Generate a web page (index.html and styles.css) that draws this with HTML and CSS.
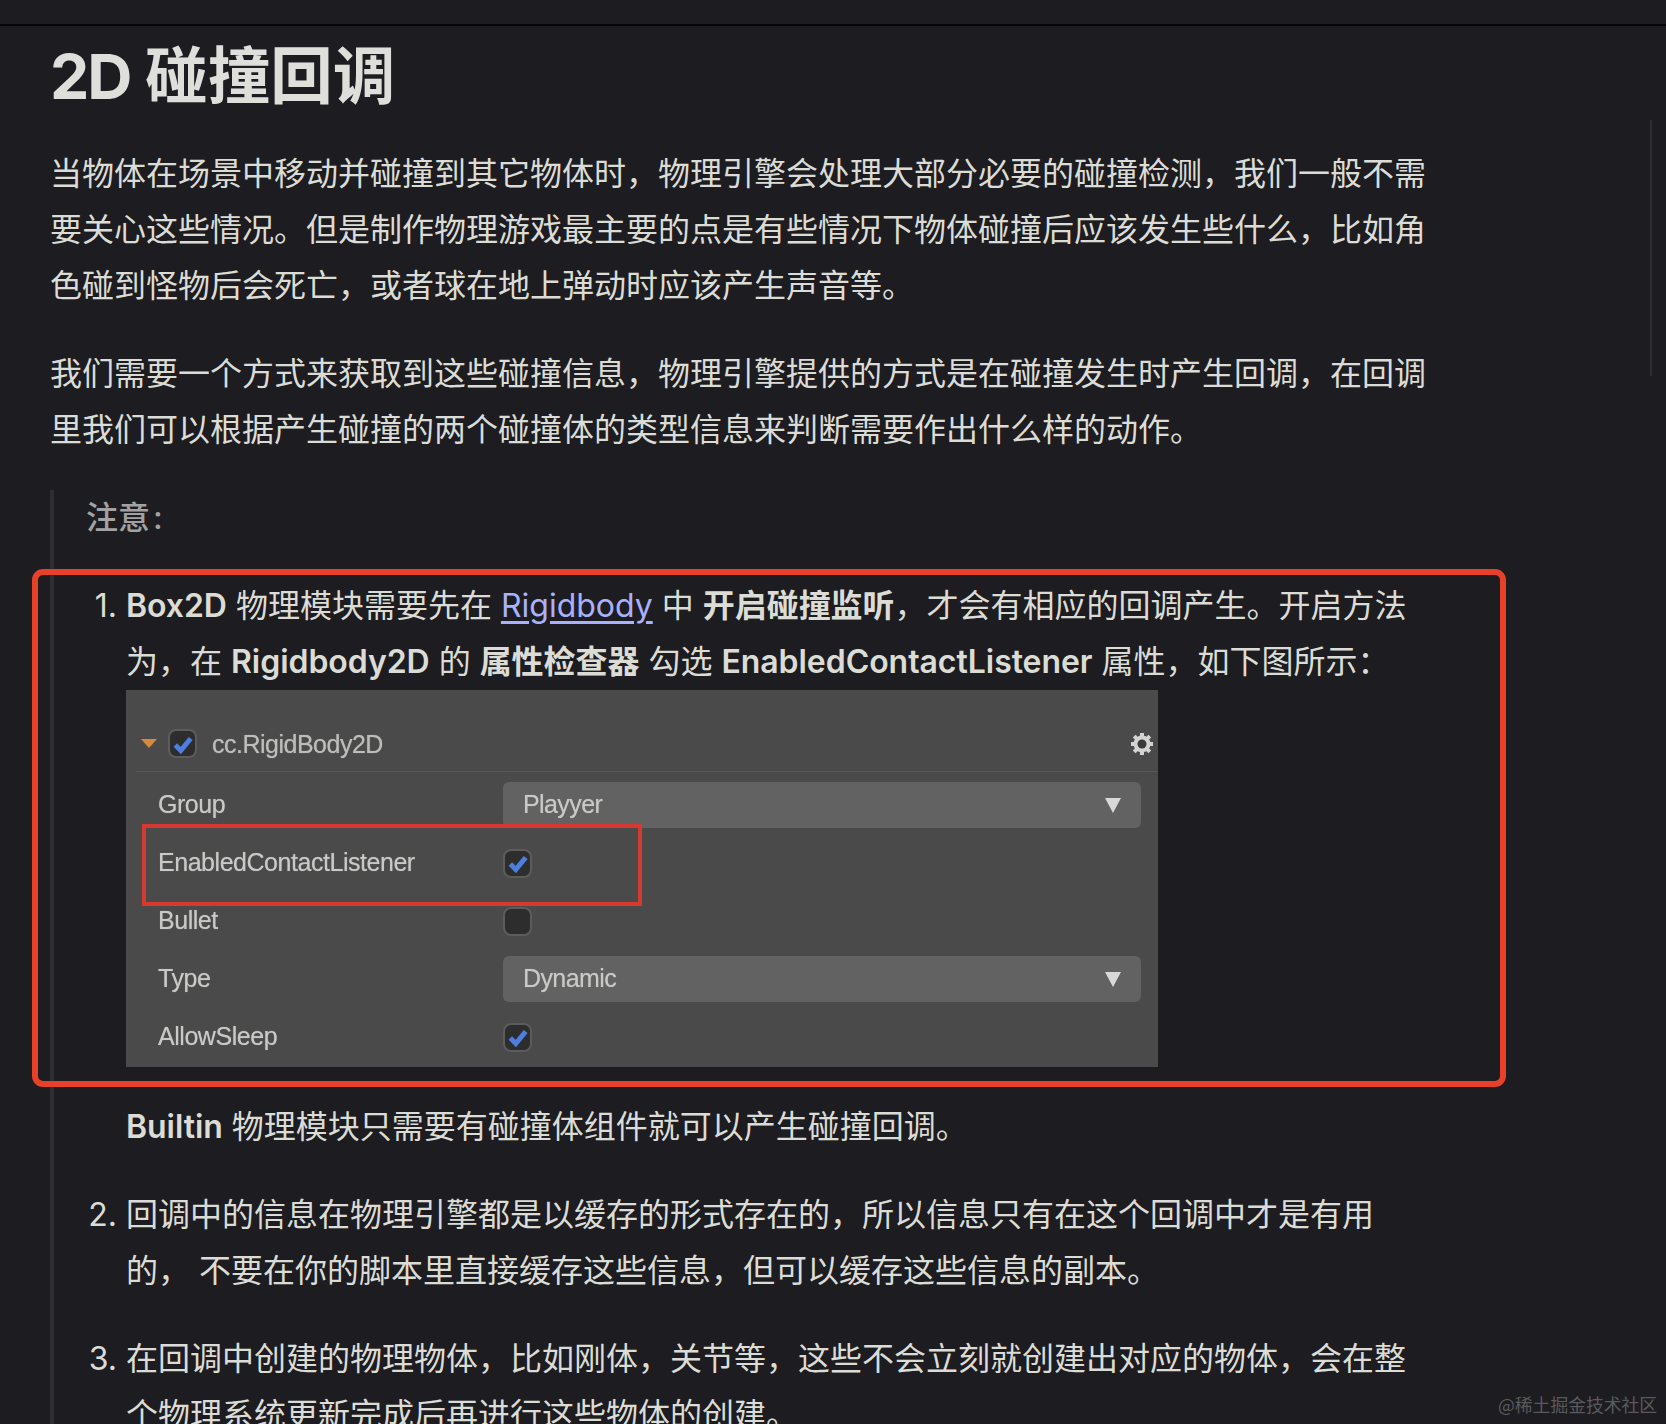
FILE: index.html
```html
<!DOCTYPE html>
<html lang="zh-CN">
<head>
<meta charset="utf-8">
<title>2D 碰撞回调</title>
<link rel="stylesheet" href="styles.css">
</head>
<body>
<header class="topbar"></header>
<main class="doc">
  <h1 class="title"><span class="title-latin">2D</span> 碰撞回调</h1>
  <p class="para">当物体在场景中移动并碰撞到其它物体时，物理引擎会处理大部分必要的碰撞检测，我们一般不需要关心这些情况。但是制作物理游戏最主要的点是有些情况下物体碰撞后应该发生些什么，比如角色碰到怪物后会死亡，或者球在地上弹动时应该产生声音等。</p>
  <p class="para">我们需要一个方式来获取到这些碰撞信息，物理引擎提供的方式是在碰撞发生时产生回调，在回调里我们可以根据产生碰撞的两个碰撞体的类型信息来判断需要作出什么样的动作。</p>
  <blockquote class="note">
    <p class="note-head">注意<span class="note-colon">:</span></p>
    <ol class="items">
      <li class="item">
        <p class="item-text"><strong>Box2D</strong> 物理模块需要先在 <a class="link" href="#">Rigidbody</a> 中 <strong>开启碰撞监听</strong>，才会有相应的回调产生。开启方法为，在 <strong>Rigidbody2D</strong> 的 <strong>属性检查器</strong> 勾选 <strong>EnabledContactListener</strong> 属性，如下图所示：</p>
        <div class="panel">
          <div class="panel-head">
            <span class="caret"></span>
            <span class="check">
              <svg class="tick" viewBox="0 0 20 20"><polyline points="3,11 8,16 17,5"></polyline></svg>
            </span>
            <span class="comp-name">cc.RigidBody2D</span>
            <svg class="gear" viewBox="0 0 24 24">
              <g class="gear-teeth">
                <line x1="12" y1="1" x2="12" y2="23"></line>
                <line x1="1" y1="12" x2="23" y2="12"></line>
                <line x1="4.2" y1="4.2" x2="19.8" y2="19.8"></line>
                <line x1="19.8" y1="4.2" x2="4.2" y2="19.8"></line>
              </g>
              <circle class="gear-body" cx="12" cy="12" r="8.5"></circle>
              <circle class="gear-hole" cx="12" cy="12" r="4.5"></circle>
            </svg>
          </div>
          <div class="rows">
            <div class="row"><span class="label">Group</span><span class="select">Playyer<i class="select-arrow"></i></span></div>
            <div class="row"><span class="label">EnabledContactListener</span><span class="check"><svg class="tick" viewBox="0 0 20 20"><polyline points="3,11 8,16 17,5"></polyline></svg></span></div>
            <div class="row"><span class="label">Bullet</span><span class="check"></span></div>
            <div class="row"><span class="label">Type</span><span class="select">Dynamic<i class="select-arrow"></i></span></div>
            <div class="row"><span class="label">AllowSleep</span><span class="check"><svg class="tick" viewBox="0 0 20 20"><polyline points="3,11 8,16 17,5"></polyline></svg></span></div>
          </div>
          <div class="mark-inner"></div>
        </div>
        <p class="item-text item-after"><strong>Builtin</strong> 物理模块只需要有碰撞体组件就可以产生碰撞回调。</p>
      </li>
      <li class="item">
        <p class="item-text">回调中的信息在物理引擎都是以缓存的形式存在的，所以信息只有在这个回调中才是有用的， 不要在你的脚本里直接缓存这些信息，但可以缓存这些信息的副本。</p>
      </li>
      <li class="item">
        <p class="item-text">在回调中创建的物理物体，比如刚体，关节等，这些不会立刻就创建出对应的物体，会在整个物理系统更新完成后再进行这些物体的创建。</p>
      </li>
    </ol>
  </blockquote>
</main>
<div class="mark-outer"></div>
<div class="scrollbar"></div>
<div class="watermark">@稀土掘金技术社区</div>
</body>
</html>
```
FILE: styles.css
```css
* { box-sizing: border-box; }
html, body { margin: 0; height: 1424px; overflow: hidden; }
body {
  position: relative;
  background: #1d1d21;
  color: #dcdcd6;
  font-family: Inter, "Noto Sans CJK SC", sans-serif;
  font-size: 32px;
  line-height: 56px;
}
.topbar { height: 26px; border-bottom: 2px solid #050507; }
.doc { width: 1430px; padding: 14px 0 0 50px; }
.title {
  margin: 0 0 34px;
  font-size: 62.5px;
  line-height: 72px;
  font-weight: 700;
  color: #dededa;
}
.title-latin { letter-spacing: -2px; }
.para { margin: 0 0 32px; }
.note {
  margin: 0;
  padding-left: 32px;
  border-left: 4px solid #2e2e32;
}
.note-head { margin: 0 0 32px; color: #a2a2a4; font-weight: 500; }
.note-colon { margin-left: 3px; }
.items { margin: 0; padding-left: 40px; }
.item { margin-bottom: 32px; }
.item::marker { font-variant-numeric: normal; }
.item-text { margin: 0; }
.item-after { margin-top: 32px; }
.link { color: #a8b1ff; text-decoration: underline; text-underline-offset: 4px; }
strong { font-weight: 600; letter-spacing: -0.05px; }

.panel {
  position: relative;
  width: 1032px;
  height: 377px;
  padding-top: 30px;
  background: #4a4a4a;
  color: #c9c9c7;
  font-family: "Liberation Sans", Arial, sans-serif;
  font-size: 25px;
  line-height: 30px;
  text-shadow: 0 0 1px rgba(201, 201, 199, 0.6);
  filter: blur(0.5px);
}
.panel-head {
  display: flex;
  align-items: center;
  height: 52px;
  margin: 0 0 5px 10px;
  padding: 0 4px 4px 5px;
  border-bottom: 1px solid #565656;
}
.caret {
  width: 0;
  height: 0;
  border-left: 8px solid transparent;
  border-right: 8px solid transparent;
  border-top: 9px solid #d68a3c;
  margin-right: 11px;
}
.check {
  display: flex;
  align-items: center;
  justify-content: center;
  width: 29px;
  height: 29px;
  background: #2d2d2d;
  border: 2px solid #5c5c5c;
  border-radius: 8px;
}
.tick { width: 22px; height: 22px; }
.tick polyline { fill: none; stroke: #4d7fe0; stroke-width: 4.5; }
.comp-name { margin-left: 15px; flex: 1; letter-spacing: -0.5px; color: #bdbdbb; }
.gear { width: 24px; height: 24px; }
.gear-teeth line { stroke: #d4d4d2; stroke-width: 4; }
.gear-body { fill: #d4d4d2; }
.gear-hole { fill: #3a3a3a; }
.rows { padding: 0 17.5px 0 32px; }
.row {
  display: grid;
  grid-template-columns: 345px 1fr;
  align-items: center;
  height: 58px;
  padding-bottom: 2px;
}
.label { letter-spacing: -0.46px; padding-bottom: 2px; }
.select {
  position: relative;
  display: flex;
  align-items: center;
  height: 46px;
  padding: 0 0 2px 20px;
  background: #626262;
  border-radius: 6px;
  letter-spacing: -0.6px;
}
.select-arrow {
  position: absolute;
  right: 20px;
  top: 16px;
  width: 0;
  height: 0;
  border-left: 8px solid transparent;
  border-right: 8px solid transparent;
  border-top: 15px solid #d8d8d8;
}
.mark-inner {
  position: absolute;
  left: 16px;
  top: 134px;
  width: 500px;
  height: 82px;
  border: 4px solid #d5392f;
}
.mark-outer {
  position: absolute;
  left: 32px;
  top: 569px;
  width: 1474px;
  height: 518px;
  border: 6px solid #e8412a;
  border-radius: 11px;
}
.scrollbar {
  position: absolute;
  left: 1650px;
  top: 120px;
  width: 2px;
  height: 256px;
  background: #2e2e32;
}
.watermark {
  position: absolute;
  left: 1498px;
  top: 1392px;
  font-family: "Noto Sans CJK SC", sans-serif;
  font-size: 17.8px;
  line-height: 24px;
  color: #5a5a5e;
  white-space: nowrap;
}
```
